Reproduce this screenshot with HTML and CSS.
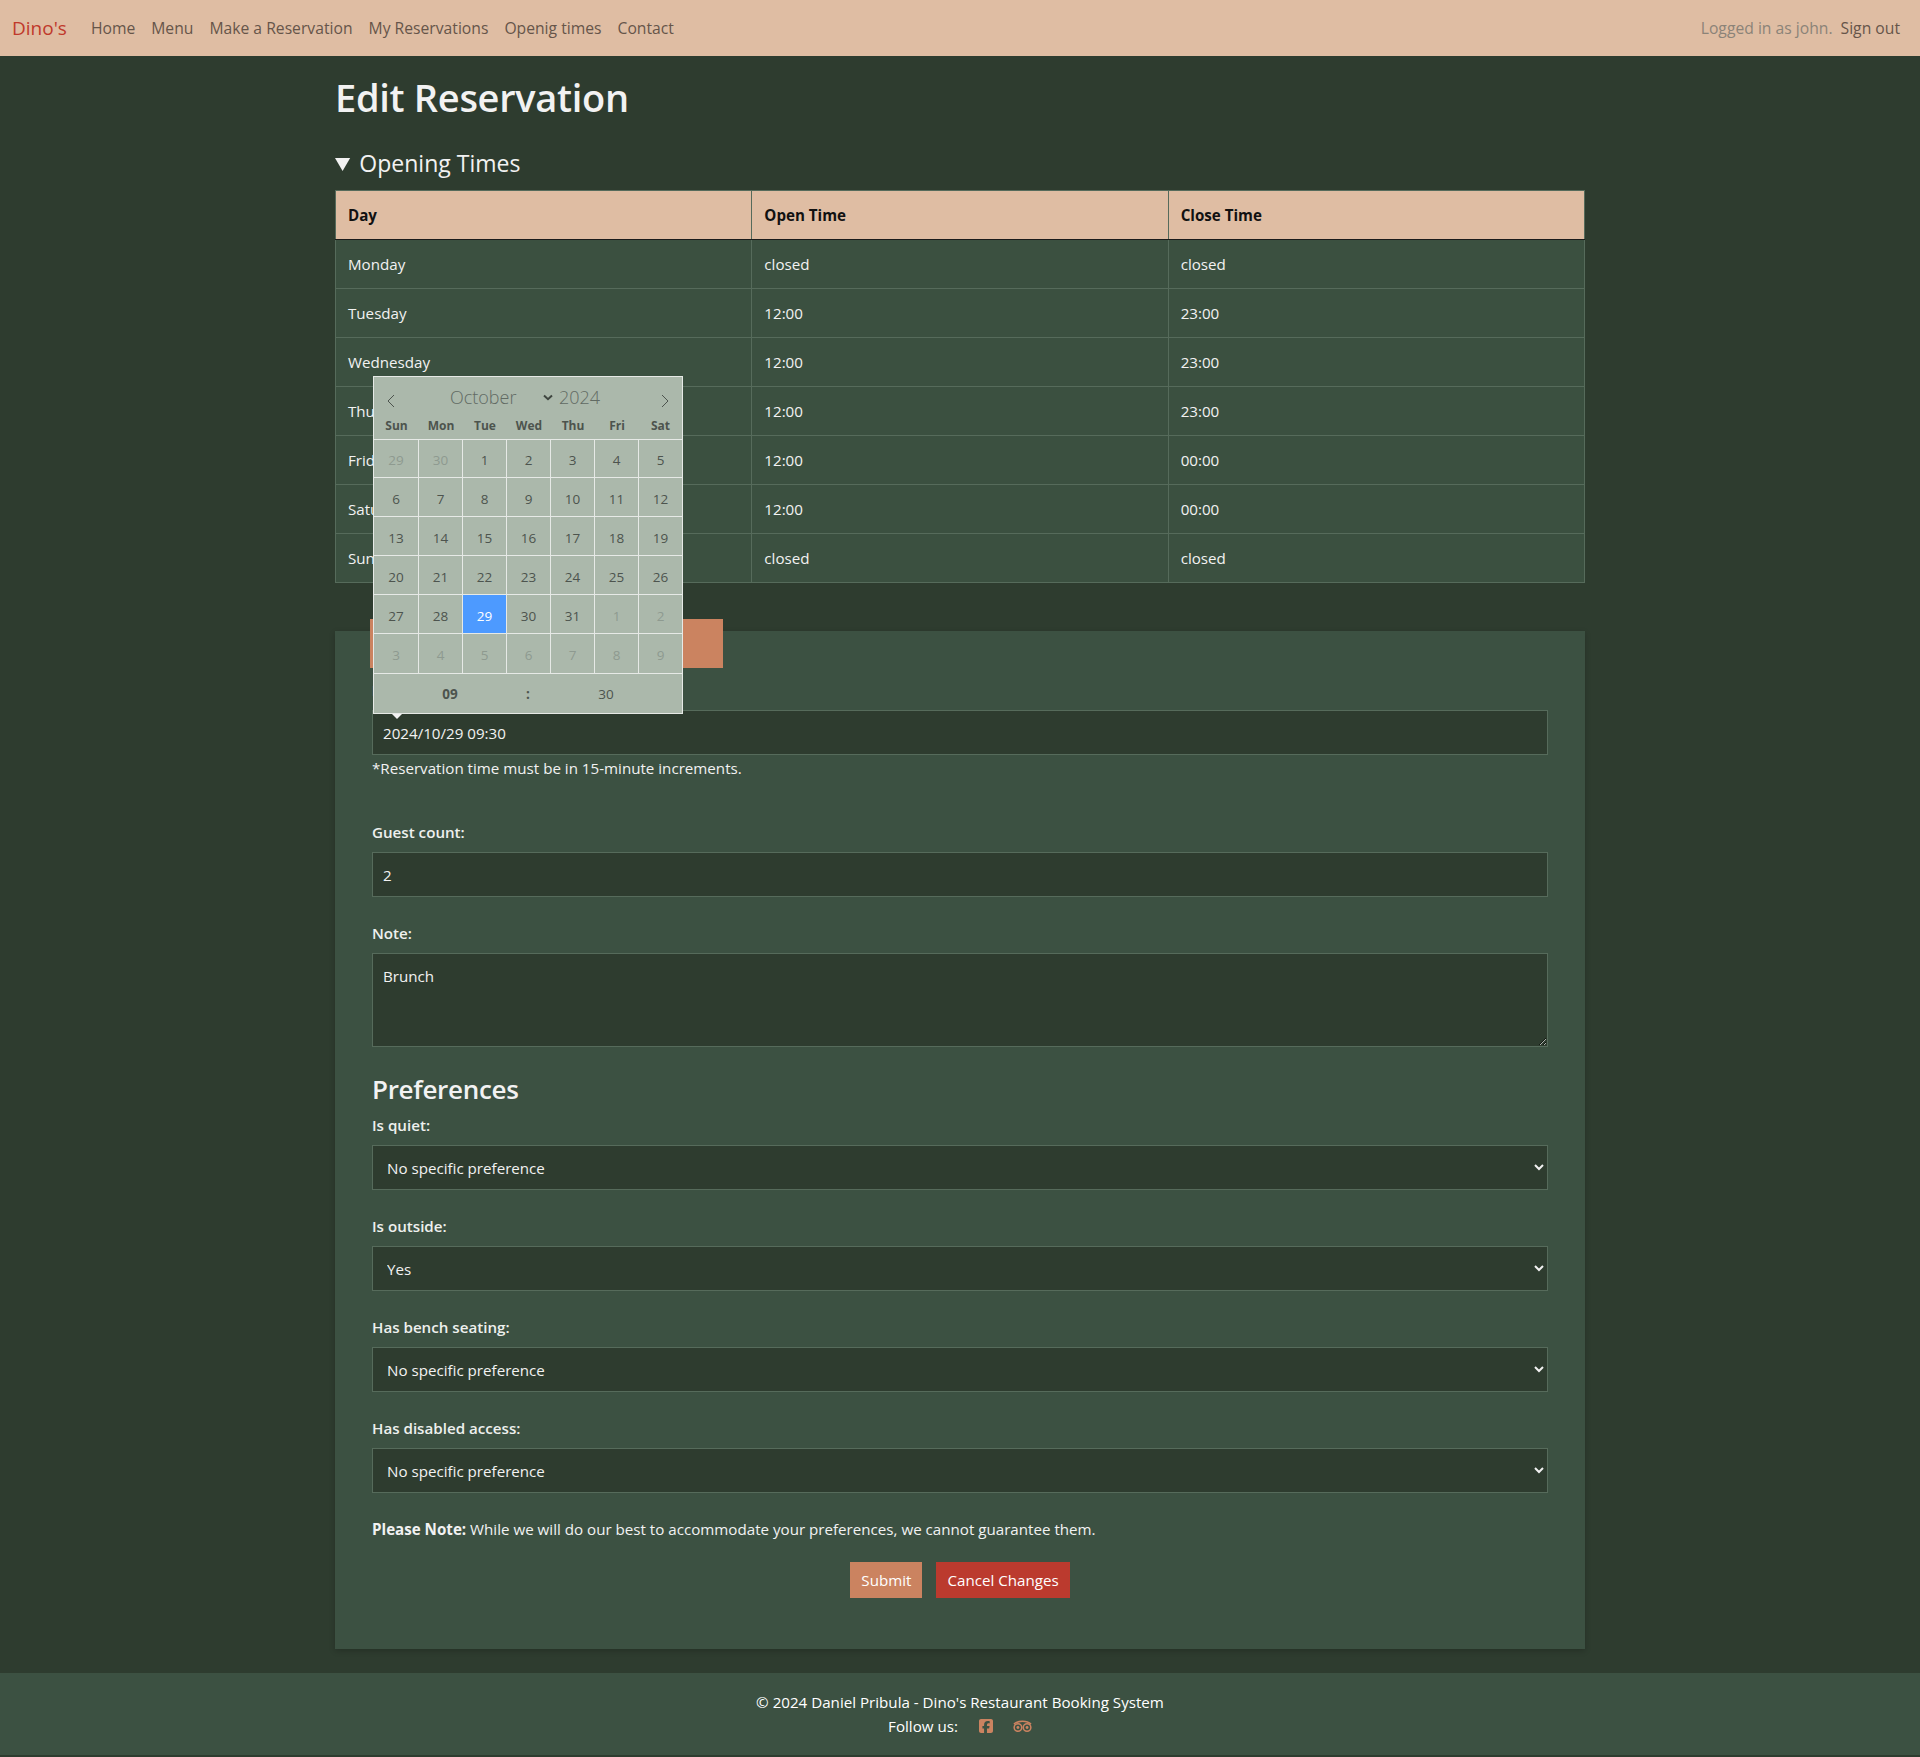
FILE: index.html
```html
<!DOCTYPE html>
<html lang="en">
<head>
    <meta charset="UTF-8">
    <meta name="viewport" content="width=device-width, initial-scale=1.0">
    <title>Edit Reservation</title>
    <link rel="stylesheet" href="styles.css">
</head>
<body>
    <nav class="navbar">
        <a class="brand" href="#">Dino's</a>
        <ul class="nav-links">
            <li><a href="#">Home</a></li>
            <li><a href="#">Menu</a></li>
            <li><a href="#">Make a Reservation</a></li>
            <li><a href="#">My Reservations</a></li>
            <li><a href="#">Openig times</a></li>
            <li><a href="#">Contact</a></li>
        </ul>
        <div class="nav-user">
            <span class="logged-in">Logged in as john.</span>
            <a href="#">Sign out</a>
        </div>
    </nav>

    <main class="container">
        <h1>Edit Reservation</h1>

        <details class="opening" open>
            <summary>Opening Times</summary>
            <table class="times">
                <thead>
                    <tr><th>Day</th><th>Open Time</th><th>Close Time</th></tr>
                </thead>
                <tbody>
                    <tr><td>Monday</td><td>closed</td><td>closed</td></tr>
                    <tr><td>Tuesday</td><td>12:00</td><td>23:00</td></tr>
                    <tr><td>Wednesday</td><td>12:00</td><td>23:00</td></tr>
                    <tr><td>Thursday</td><td>12:00</td><td>23:00</td></tr>
                    <tr><td>Friday</td><td>12:00</td><td>00:00</td></tr>
                    <tr><td>Saturday</td><td>12:00</td><td>00:00</td></tr>
                    <tr><td>Sunday</td><td>closed</td><td>closed</td></tr>
                </tbody>
            </table>
        </details>

        <form class="card">
            <div class="card-tab"></div>

            <label class="date-label" for="when">Date and time:</label>
            <input class="field" id="when" type="text" value="2024/10/29 09:30">
            <p class="hint">*Reservation time must be in 15-minute increments.</p>

            <label class="guest-label" for="guests">Guest count:</label>
            <input class="field" id="guests" type="text" value="2">

            <label class="next" for="note">Note:</label>
            <textarea class="field note" id="note">Brunch</textarea>

            <h3>Preferences</h3>

            <label for="quiet">Is quiet:</label>
            <select class="field pick" id="quiet"><option>No specific preference</option></select>

            <label class="next" for="outside">Is outside:</label>
            <select class="field pick" id="outside"><option>Yes</option></select>

            <label class="next" for="bench">Has bench seating:</label>
            <select class="field pick" id="bench"><option>No specific preference</option></select>

            <label class="next" for="access">Has disabled access:</label>
            <select class="field pick" id="access"><option>No specific preference</option></select>

            <p class="please"><strong>Please Note:</strong> While we will do our best to accommodate your preferences, we cannot guarantee them.</p>

            <div class="actions">
                <button class="btn btn-submit" type="button">Submit</button>
                <button class="btn btn-cancel" type="button">Cancel Changes</button>
            </div>
        </form>
    </main>

    <footer class="footer">
        <p>© 2024 Daniel Pribula - Dino's Restaurant Booking System</p>
        <p class="follow">
            <span>Follow us:</span>
            <svg class="icon-fb" viewBox="0 32 448 448"><path d="M64 32C28.7 32 0 60.7 0 96V416c0 35.3 28.7 64 64 64h98.2V334.2H109.4V256h52.8V222.3c0-87.1 39.4-127.5 125-127.5c16.2 0 44.2 3.2 55.7 6.4V172c-6-.6-16.5-1-29.6-1c-42 0-58.2 15.9-58.2 57.2V256h83.6l-14.4 78.2H255V480H384c35.3 0 64-28.7 64-64V96c0-35.3-28.7-64-64-64H64z"/></svg>
            <svg class="icon-trip" viewBox="0 0 20 13">
                <path class="trip-top" d="M1 4C3.5 1.6 6.5.9 10 .9s6.500.7 9 3.100"/>
                <circle class="trip-eye" cx="5.200" cy="7.600" r="4"/>
                <circle class="trip-eye" cx="14.800" cy="7.600" r="4"/>
                <circle class="trip-dot" cx="5.200" cy="7.600" r="1.500"/>
                <circle class="trip-dot" cx="14.800" cy="7.600" r="1.500"/>
            </svg>
        </p>
    </footer>

    <!-- open date picker, sits over the table and the form -->
    <div class="picker">
        <div class="picker-head">
            <svg class="picker-arrow" viewBox="0 0 9 14"><path d="M8 1 2 7l6 6"/></svg>
            <div class="picker-title">
                <span class="picker-month">October</span>
                <svg class="picker-chevron" viewBox="0 0 10 7"><path d="M1 1.500 5 5.200l4-3.700"/></svg>
                <span class="picker-year">2024</span>
            </div>
            <svg class="picker-arrow" viewBox="0 0 9 14"><path d="M1 1l6 6-6 6"/></svg>
        </div>
        <div class="picker-week">
            <span>Sun</span><span>Mon</span><span>Tue</span><span>Wed</span><span>Thu</span><span>Fri</span><span>Sat</span>
        </div>
        <div class="picker-days" id="days"></div>
        <div class="picker-time">
            <b>09</b>
            <b>:</b>
            <span>30</span>
        </div>
    </div>

    <script>
        // 29 Sep to 9 Nov, only October is in the current month
        const daysBox = document.getElementById('days');
        for (let i = 0; i < 42; i++) {
            const cell = document.createElement('span');
            let n = i - 1;
            let other = false;
            if (i < 2) { n = 29 + i; other = true; }
            else if (n > 31) { n -= 31; other = true; }
            cell.textContent = n;
            cell.className = 'day' + (other ? ' other' : '') + (i === 30 ? ' picked' : '');
            daysBox.appendChild(cell);
        }
    </script>
</body>
</html>
```

FILE: styles.css
```css
* {
    box-sizing: border-box;
}

body {
    font-family: "Open Sans", "Noto Sans", sans-serif;
    font-size: 15.150px;
    line-height: 24px;
    margin: 0;
    min-height: 1757px;
    background-color: #2e3c2f;
    color: #f2f2f2;
}

a {
    text-decoration: none;
}

p {
    margin: 0;
}

/* navbar */
.navbar {
    display: flex;
    align-items: center;
    height: 56px;
    padding: 0 20px 0 12px;
    background-color: #dfbda3;
    font-size: 15.700px;
}

.brand {
    font-size: 19px;
    color: #c0392b;
    margin-right: 24px;
}

.nav-links {
    display: flex;
    gap: 16px;
    list-style: none;
    margin: 0;
    padding: 0;
}

.nav-links a,
.nav-user a {
    color: #66554a;
    font-weight: 500;
}

.nav-user {
    margin-left: auto;
    display: flex;
    gap: 8px;
}

.logged-in {
    color: #8b8378;
}

/* main */
.container {
    width: 1250px;
    margin: 0 auto;
}

h1 {
    font-size: 38px;
    font-weight: 600;
    line-height: 48px;
    letter-spacing: -0.3px;
    margin: 17px 0 0;
}

.opening {
    margin-top: 28px;
}

.opening summary {
    font-size: 23px;
    line-height: 29px;
    margin-bottom: 12px;
    cursor: pointer;
}

.times {
    width: 100%;
    table-layout: fixed;
    border-collapse: collapse;
    background-color: #3b5040;
}

.times th,
.times td {
    height: 49px;
    padding: 0 12px;
    text-align: left;
    border: 1px solid #566b5b;
}

.times th {
    background-color: #dfbda3;
    color: #111;
    font-weight: 700;
    border-bottom-color: #1b1b1b;
}

/* form card */
.card {
    display: flex;
    flex-direction: column;
    align-items: flex-start;
    margin-top: 48px;
    padding: 0 37px;
    height: 1018px;
    background-color: #3c5142;
    box-shadow: 0 2px 6px rgba(0, 0, 0, 0.2);
}

.card > * {
    flex-shrink: 0;
}

.card-tab {
    width: 353px;
    height: 49px;
    margin: -12px 0 0 -2px;
    background-color: #cb8360;
}

label {
    font-weight: 600;
    margin-bottom: 8px;
    color: #eef0ee;
}

.date-label {
    margin-top: 10px;
}

.guest-label {
    margin-top: 41px;
}

.field {
    display: block;
    width: 1176px;
    height: 45px;
    padding: 0 10px;
    font: inherit;
    color: #f2f2f2;
    background-color: #2e3c2f;
    border: 1px solid #566b5b;
    border-radius: 0;
    outline: none;
}

.note {
    height: 94px;
    padding-top: 10px;
}

.hint {
    height: 24px;
    padding-top: 1px;
}

h3 {
    font-size: 26px;
    font-weight: 600;
    line-height: 34px;
    letter-spacing: -0.3px;
    margin: 25px 0 7px;
}

.next {
    margin-top: 24px;
}

.please {
    margin-top: 24px;
}

.actions {
    display: flex;
    justify-content: center;
    gap: 14px;
    align-self: stretch;
    margin-top: 21px;
}

.btn {
    height: 36px;
    padding: 0 11px;
    border: none;
    font: inherit;
    color: #fff;
}

.btn-submit {
    background-color: #cb8360;
}

.btn-cancel {
    background-color: #bb3a2e;
}

/* footer */
.footer {
    margin-top: 24px;
    height: 82px;
    padding-top: 17px;
    text-align: center;
    background-color: #3c5142;
    color: #fff;
}

.follow {
    display: flex;
    justify-content: center;
    align-items: center;
    height: 24px;
}

.icon-fb {
    width: 14px;
    height: 14px;
    margin-left: 21px;
    fill: #cb8360;
}

.icon-trip {
    width: 19px;
    height: 13px;
    margin-left: 20px;
}

.trip-top,
.trip-eye {
    fill: none;
    stroke: #cb8360;
    stroke-width: 1.600;
}

.trip-dot {
    fill: #cb8360;
}

/* date picker */
.picker {
    position: absolute;
    left: 373px;
    top: 376px;
    width: 310px;
    height: 338px;
    color: #4d544e;
    background-color: #abb8ab;
    border: 1px solid #e6e9e6;
    font-size: 14px;
}

.picker::after {
    content: "";
    position: absolute;
    left: 18px;
    bottom: -6px;
    border: 5px solid transparent;
    border-bottom-width: 0;
    border-top: 5px solid #f2f2f2;
}

.picker-head {
    display: flex;
    align-items: center;
    justify-content: space-between;
    height: 38px;
    padding: 5px 12px 0;
}

.picker-arrow {
    width: 9px;
    height: 14px;
    margin-top: 4px;
    fill: none;
    stroke: #4d544e;
    stroke-width: 1;
}

.picker-title {
    display: flex;
    align-items: center;
    margin: -3px 6px 0 0;
    font-size: 18px;
    font-weight: 300;
    color: #616a63;
}

.picker-month {
    width: 93px;
}

.picker-chevron {
    width: 10px;
    height: 7px;
    fill: none;
    stroke: #3f4640;
    stroke-width: 2;
    margin-right: 6px;
}

.picker-week {
    display: grid;
    grid-template-columns: 45px repeat(5, 44px) 43px;
    height: 24px;
    text-align: center;
    font-size: 12px;
    font-weight: 700;
    line-height: 22px;
}

.picker-days {
    display: grid;
    grid-template-columns: 45px repeat(5, 44px) 43px;
    grid-template-rows: 38px repeat(4, 39px) 40px;
    border-top: 1px solid #e6e9e6;
}

.day {
    display: flex;
    align-items: center;
    justify-content: center;
    padding-top: 3px;
    font-size: 13.500px;
    border-right: 1px solid #e6e9e6;
    border-bottom: 1px solid #e6e9e6;
}

.day:nth-child(7n) {
    border-right: none;
}

.other {
    color: #8e9a90;
}

.picked {
    background-color: #4d9aff;
    color: #fff;
}

.picker-time {
    display: grid;
    grid-template-columns: repeat(3, 78px);
    justify-content: center;
    align-items: center;
    height: 39px;
    text-align: center;
    font-size: 13.500px;
}
```
